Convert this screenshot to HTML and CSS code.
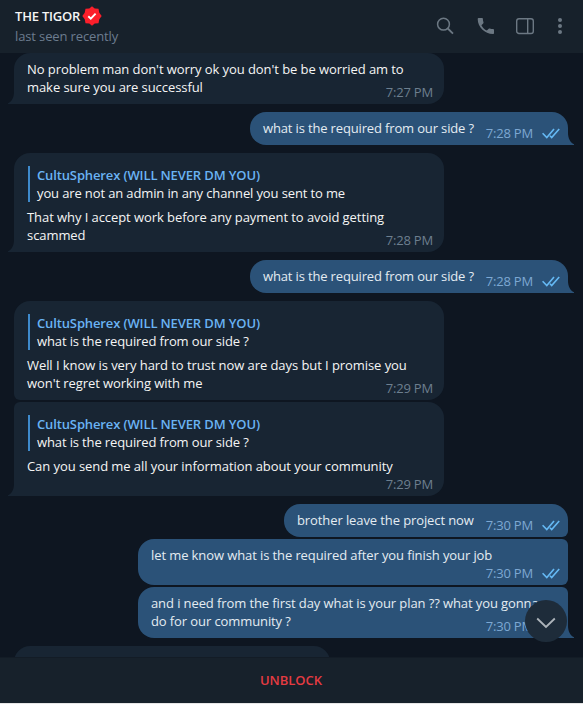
FILE: index.html
```html
<!DOCTYPE html>
<html lang="en">
<head>
    <meta charset="UTF-8">
    <meta name="viewport" content="width=device-width, initial-scale=1.0">
    <title>THE TIGOR</title>
    <link rel="stylesheet" href="styles.css">
</head>
<body>

    <svg class="symbols" aria-hidden="true">
        <symbol id="tail" viewBox="0 0 7 12">
            <path d="M0 0C0 5 2 9.500 6 11.200V12H0z" fill="currentColor"/>
        </symbol>
        <symbol id="checks" viewBox="0 0 18 11">
            <path d="M0.600 5.200L4.800 9.600L12 0.900M8 7.700L9.700 9.600L17.200 0.900" fill="none" stroke="currentColor" stroke-width="1.600"/>
        </symbol>
    </svg>

    <header class="header">
        <div class="peer">
            <div class="peer-name">THE TIGOR
                <svg class="badge" width="20" height="20" viewBox="0 0 20 20">
                    <path d="M10 0.300L12.700 2.500L16.500 2.700L17.300 6.800L19.700 10L17.300 13.200L16.500 17.300L12.700 17.500L10 19.700L7.300 17.500L3.500 17.300L2.700 13.200L0.300 10L2.700 6.800L3.500 2.700L7.300 2.500z" fill="#fb1f2b"/>
                    <path d="M6.300 10.300L8.800 12.700L13.600 7.700" fill="none" stroke="#fff" stroke-width="1.900"/>
                </svg>
            </div>
            <div class="peer-status">last seen recently</div>
        </div>
        <div class="actions">
            <svg width="18" height="18" viewBox="0 0 18 18" fill="none" stroke="currentColor" stroke-width="1.500">
                <circle cx="7.500" cy="7.200" r="5.900"/>
                <path d="M11.800 11.500L17 16.700" stroke-width="1.800"/>
            </svg>
            <svg width="18" height="18" viewBox="-1 0 18 18" fill="currentColor">
                <path d="M1.500 1H4.900C5.500 1 5.900 1.400 5.900 2C5.900 3.200 6.100 4.300 6.500 5.300C6.600 5.700 6.500 6.100 6.200 6.400L4.400 8.200C5.800 10.600 7.500 12.400 9.900 13.600L11.700 11.800C12 11.500 12.400 11.400 12.800 11.500C13.900 11.900 15 12.100 16.100 12.100C16.700 12.100 17 12.500 17 13V16C17 16.600 16.600 17 16 17C7.700 17 0.700 10 0.700 2C0.700 1.400 1 1 1.500 1z"/>
            </svg>
            <svg width="18" height="18" viewBox="0 0 18 18" fill="none" stroke="currentColor" stroke-width="1.400">
                <rect x="0.700" y="1.700" width="16.600" height="14.800" rx="2.300"/>
                <path d="M11.700 1.700V16.500"/>
            </svg>
            <svg class="dots" width="4" height="18" viewBox="0 0 4 18" fill="currentColor">
                <circle cx="2" cy="3" r="2"/>
                <circle cx="2" cy="9" r="2"/>
                <circle cx="2" cy="15" r="2"/>
            </svg>
        </div>
    </header>

    <main class="chat">
        <div class="message in last">
            <div class="content">
                <p class="text">No problem man don't worry ok you don't be be worried am to<br>make sure you are successful</p>
                <div class="meta">7:27 PM</div>
            </div>
            <svg class="tail"><use href="#tail"/></svg>
        </div>

        <div class="message out last w-318">
            <div class="content">
                <p class="text">what is the required from our side ?</p>
                <div class="meta">7:28 PM <svg class="checks"><use href="#checks"/></svg></div>
            </div>
            <svg class="tail"><use href="#tail"/></svg>
        </div>

        <div class="message in last">
            <blockquote class="reply">
                <div class="reply-name">CultuSpherex (WILL NEVER DM YOU)</div>
                <div>you are not an admin in any channel you sent to me</div>
            </blockquote>
            <div class="content">
                <p class="text">That why I accept work before any payment to avoid getting<br>scammed</p>
                <div class="meta">7:28 PM</div>
            </div>
            <svg class="tail"><use href="#tail"/></svg>
        </div>

        <div class="message out last w-318">
            <div class="content">
                <p class="text">what is the required from our side ?</p>
                <div class="meta">7:28 PM <svg class="checks"><use href="#checks"/></svg></div>
            </div>
            <svg class="tail"><use href="#tail"/></svg>
        </div>

        <div class="message in joined-below">
            <blockquote class="reply">
                <div class="reply-name">CultuSpherex (WILL NEVER DM YOU)</div>
                <div>what is the required from our side ?</div>
            </blockquote>
            <div class="content">
                <p class="text">Well I know is very hard to trust now are days but I promise you<br>won't regret working with me</p>
                <div class="meta">7:29 PM</div>
            </div>
        </div>

        <div class="message in joined-above last">
            <blockquote class="reply">
                <div class="reply-name">CultuSpherex (WILL NEVER DM YOU)</div>
                <div>what is the required from our side ?</div>
            </blockquote>
            <div class="content meta-below">
                <p class="text">Can you send me all your information about your community</p>
                <div class="meta">7:29 PM</div>
            </div>
            <svg class="tail"><use href="#tail"/></svg>
        </div>

        <div class="message out joined-below w-284">
            <div class="content">
                <p class="text">brother leave the project now</p>
                <div class="meta">7:30 PM <svg class="checks"><use href="#checks"/></svg></div>
            </div>
        </div>

        <div class="message out joined-above joined-below">
            <div class="content meta-below">
                <p class="text">let me know what is the required after you finish your job</p>
                <div class="meta">7:30 PM <svg class="checks"><use href="#checks"/></svg></div>
            </div>
        </div>

        <div class="message out joined-above last">
            <div class="content">
                <p class="text">and i need from the first day what is your plan ?? what you gonna<br>do for our community ?</p>
                <div class="meta">7:30 PM <svg class="checks"><use href="#checks"/></svg></div>
            </div>
            <svg class="tail"><use href="#tail"/></svg>
        </div>

        <div class="message in next"></div>

        <button class="scroll-down" aria-label="Scroll down">
            <svg width="20" height="12" viewBox="0 0 20 12" fill="none" stroke="currentColor" stroke-width="1.800">
                <path d="M1.200 1.500L10 10L18.800 1.500"/>
            </svg>
        </button>
    </main>

    <footer class="footer">
        <button class="unblock">UNBLOCK</button>
    </footer>

</body>
</html>
```

FILE: styles.css
```css
* {
    box-sizing: border-box;
}
body {
    margin: 0;
    height: 704px;
    display: flex;
    flex-direction: column;
    overflow: hidden;
    background-color: #0e1621;
    color: #f5f5f5;
    font-family: "Open Sans", "Noto Sans", sans-serif;
    font-size: 13px;
    line-height: 18px;
    letter-spacing: -0.07px;
}
.symbols {
    position: absolute;
    width: 0;
    height: 0;
}
.header {
    height: 53px;
    flex: none;
    display: flex;
    justify-content: space-between;
    padding: 6px 21px 0 15px;
    background-color: #17212b;
}
.peer-name {
    display: flex;
    align-items: center;
    gap: 2px;
    height: 20px;
    font-weight: 600;
    letter-spacing: -0.2px;
}
.peer-status {
    margin-top: 1px;
    color: #6c7c8f;
    letter-spacing: -0.13px;
}
.actions {
    display: flex;
    gap: 22px;
    padding-top: 11px;
    color: #6c7883;
}
.actions .dots {
    margin-left: 2px;
}

/* Messages */
.chat {
    position: relative;
    flex: 1;
    display: flex;
    flex-direction: column;
    gap: 8px;
    overflow: hidden;
    padding: 0 15px 0 14px;
}
.message {
    position: relative;
    flex: none;
    width: 430px;
    padding: 7px 11px 8px 13px;
    border-radius: 16px;
}
.in {
    align-self: flex-start;
    background-color: #182533;
}
.out {
    align-self: flex-end;
    padding-right: 8px;
    background-color: #2b5278;
    color: #e4ecf2;
    letter-spacing: -0.1px;
}
.w-318 {
    width: 318px;
    letter-spacing: -0.15px;
}
.w-284 {
    width: 284px;
}
.joined-above {
    margin-top: -6px;
}
.in.joined-above {
    border-top-left-radius: 6px;
}
.in.joined-below {
    border-bottom-left-radius: 6px;
}
.out.joined-above {
    border-top-right-radius: 6px;
}
.out.joined-below {
    border-bottom-right-radius: 6px;
}
.in.last {
    border-bottom-left-radius: 0;
}
.out.last {
    border-bottom-right-radius: 0;
}
.next {
    width: 316px;
    height: 60px;
}
.tail {
    position: absolute;
    bottom: 0;
    width: 7px;
    height: 12px;
}
.out .tail {
    left: 100%;
    color: #2b5278;
}
.in .tail {
    right: 100%;
    color: #182533;
    transform: scaleX(-1);
}
.reply {
    margin: 6px 0 6px 1px;
    padding-left: 7px;
    border-left: 2px solid #3e8acc;
    letter-spacing: -0.13px;
}
.reply-name {
    color: #6ab3f3;
    font-weight: 600;
}

/* Text and time share one cell, the time sits in the bottom corner */
.content {
    display: grid;
}
.text,
.meta {
    grid-area: 1 / 1;
}
.text {
    margin: 0;
    white-space: nowrap;
}
.meta {
    align-self: end;
    justify-self: end;
    display: flex;
    align-items: center;
    gap: 9px;
    margin-bottom: -5px;
    color: #6d7f8f;
    letter-spacing: -0.2px;
}
.meta-below .text {
    padding-bottom: 13px;
}
.out .meta {
    color: #7da8d3;
}
.checks {
    width: 18px;
    height: 11px;
    color: #65b9f4;
}

.scroll-down {
    position: absolute;
    right: 16px;
    bottom: 15px;
    width: 42px;
    height: 42px;
    padding: 3px 0 0;
    display: flex;
    align-items: center;
    justify-content: center;
    border: none;
    border-radius: 50%;
    background-color: #1e2c3a;
    color: #adb4ba;
}
.footer {
    height: 47px;
    flex: none;
    display: flex;
    border-top: 1px solid #131c26;
    border-bottom: 1px solid #e6e6e6;
    background-color: #17212b;
}
.unblock {
    flex: 1;
    padding: 0 1px 2px 0;
    border: none;
    background: none;
    color: #e53b42;
    font: inherit;
    font-weight: 600;
}
```
